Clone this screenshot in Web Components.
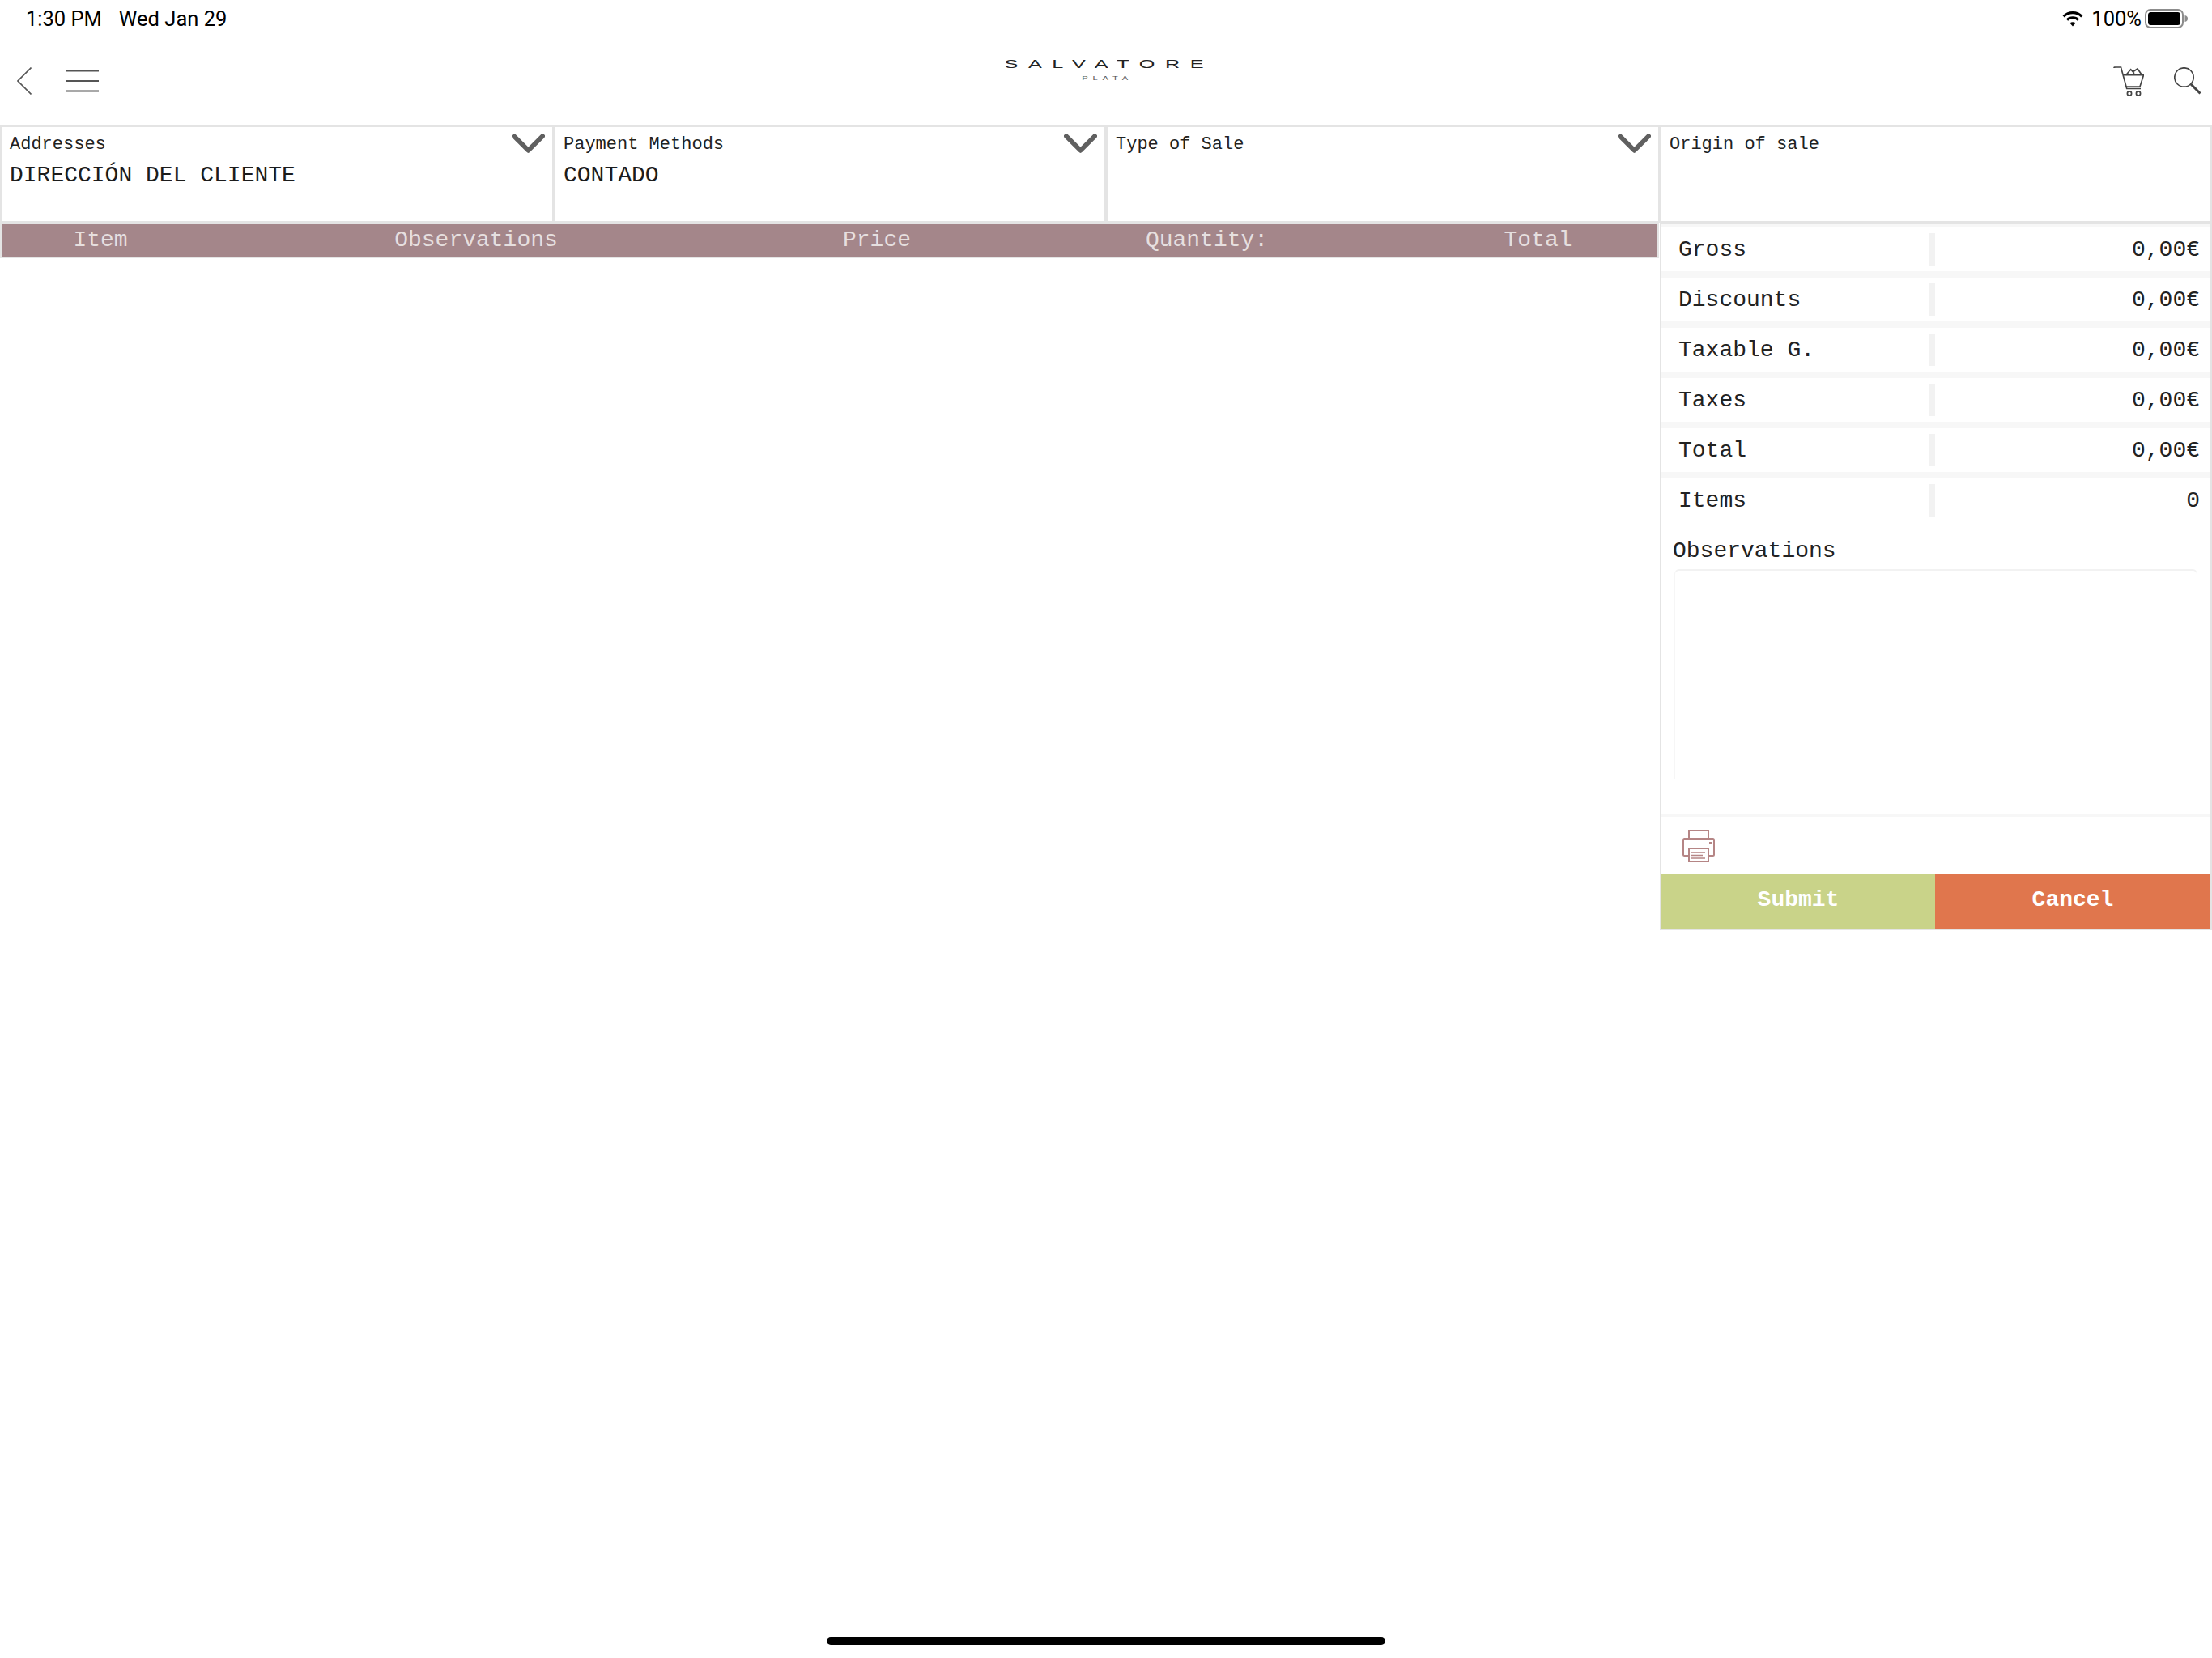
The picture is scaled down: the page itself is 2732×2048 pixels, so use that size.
<!DOCTYPE html>
<html lang="en">
<head>
<meta charset="utf-8">
<title>Salvatore Plata</title>
<style>
   html, body { margin: 0; padding: 0; background: #fff; }
   body { width: 2732px; height: 2048px; overflow: hidden; font-family: "Liberation Mono", monospace; color: #222; }
</style>
</head>
<body>
<order-page></order-page>

<script>
// status bar at the very top of the tablet
class StatusBar extends HTMLElement {
   constructor() {
      super();
      this.attachShadow({ mode: "open" });
      this.shadowRoot.innerHTML = `
         <style>
            :host {
               display: flex;
               align-items: center;
               block-size: 46px;
               padding-inline: 32px 29px;
               font: 25.5px Roboto, sans-serif;
               color: #000;
            }
            .date { margin-inline-start: 21px; }
            .right { margin-inline-start: auto; display: flex; align-items: center; }
            .pct { margin-inline: 10px 4px; }
            svg { display: block; }
         </style>
         <span>1:30 PM</span>
         <span class="date">Wed Jan 29</span>
         <div class="right">
            <svg width="26" height="20" viewBox="0 0 26 20">
               <path d="M1.700 7.300A16 16 0 0 1 24.300 7.300M6 11.600A10 10 0 0 1 20 11.600" fill="none" stroke="#000" stroke-width="3.200"/>
               <path d="M13 19.500L9.400 15.600A5.200 5.200 0 0 1 16.600 15.600Z" fill="#000"/>
            </svg>
            <span class="pct">100%</span>
            <svg width="54" height="24" viewBox="0 0 54 24">
               <rect x="1" y="1" width="46" height="22" rx="6" fill="none" stroke="#8c8c8c" stroke-width="2"/>
               <rect x="4" y="4" width="40" height="16" rx="3.5" fill="#000"/>
               <path d="M49.5 8C52 8.5 53 10 53 12S52 15.5 49.5 16Z" fill="#8c8c8c"/>
            </svg>
         </div>`;
   }
}

// back / menu, logo, cart / search
class NavBar extends HTMLElement {
   constructor() {
      super();
      this.attachShadow({ mode: "open" });
      this.shadowRoot.innerHTML = `
         <style>
            :host {
               display: grid;
               grid-template-columns: 1fr auto 1fr;
               align-items: center;
               block-size: 107px;
               padding-block-end: 2px;
               padding-inline: 13px;
            }
            .left, .right { display: flex; align-items: center; }
            .left { gap: 43px; margin-inline-start: 8px; }
            .right { justify-content: flex-end; gap: 37px; }
            svg { display: block; }
            .logo {
               display: flex;
               flex-direction: column;
               align-items: center;
               margin-block-end: 26px;
               font-family: "Liberation Sans", sans-serif;
               color: #222;
            }
            .brand {
               font-size: 14px;
               line-height: 10px;
               letter-spacing: 7px;
               margin-inline-end: -7px;
               transform: scaleX(1.8);
            }
            .sub {
               font-size: 7px;
               line-height: 5px;
               margin-block-start: 10px;
               letter-spacing: 3.6px;
               margin-inline-end: -3.6px;
               transform: scaleX(1.6);
               color: #555;
            }
         </style>
         <div class="left">
            <svg width="18" height="34" viewBox="0 0 18 34"><path d="M17.5 .5L1 17L17.5 33.5" fill="none" stroke="#555" stroke-width="1.6"/></svg>
            <svg width="40" height="28" viewBox="0 0 40 28"><path d="M0 1.5H40M0 14H40M0 26.5H40" fill="none" stroke="#555" stroke-width="2.2"/></svg>
         </div>
         <div class="logo"><span class="brand">SALVATORE</span><span class="sub">PLATA</span></div>
         <div class="right">
            <svg width="38" height="38" viewBox="0 0 38 38" fill="none" stroke="#444" stroke-width="1.7">
               <path d="M1 3C1 2 2 2 3 2H9.500L16.700 28.500H34"/>
               <path d="M12.500 11.700H37.500L33 26H16"/>
               <path d="M15.700 11.700L21.700 4.700L26 9.700M25 7.300L30 4L35 11"/>
               <circle cx="20" cy="34.500" r="2.600"/><circle cx="31" cy="34.500" r="2.600"/>
            </svg>
            <svg width="34" height="34" viewBox="0 0 34 34" fill="none" stroke="#444">
               <circle cx="12.500" cy="12.500" r="11.700" stroke-width="1.700"/>
               <path d="M21 21L32.500 32.500" stroke-width="3"/>
            </svg>
         </div>`;
   }
}

// one select-like box of the top row
class FieldBox extends HTMLElement {
   constructor() {
      super();
      this.attachShadow({ mode: "open" });
      const arrow = this.hasAttribute("arrow")
         ? `<svg class="arrow" width="41" height="24" viewBox="0 0 42 24"><path d="M3 3L21 21L39 3" fill="none" stroke="#606060" stroke-width="6" stroke-linecap="round" stroke-linejoin="round"/></svg>`
         : "";
      this.shadowRoot.innerHTML = `
         <style>
            :host {
               display: block;
               position: relative;
               box-sizing: border-box;
               block-size: 120px;
               border: 2px solid #e4e4e4;
               padding: 10px 10px 0;
            }
            .label { font-size: 22px; line-height: 24px; }
            .value { font-size: 28px; line-height: 32px; margin-block-start: 10px; color: #1c1c1c; }
            .arrow { position: absolute; inset-block-start: 8px; inset-inline-end: 9px; }
         </style>
         <div class="label">${this.getAttribute("label")}</div>
         <div class="value"><slot></slot></div>
         ${arrow}`;
   }
}

// heading of the empty lines table
class LinesHeader extends HTMLElement {
   constructor() {
      super();
      this.attachShadow({ mode: "open" });
      this.shadowRoot.innerHTML = `
         <style>
            :host {
               display: grid;
               grid-template-columns: 244px 684px 306px 506px 1fr;
               box-sizing: border-box;
               inline-size: 2049px;
               border: 2px solid #e4e4e4;
               font-size: 28px;
               line-height: 40px;
               color: #e6dfdf;
            }
            span { background: #a4868a; text-align: center; }
            .qty { padding-inline-start: 3px; }
            span:last-child { padding-inline-start: 10px; }
         </style>
         <span>Item</span><span>Observations</span><span>Price</span><span class="qty">Quantity:</span><span>Total</span>`;
   }
}

// label | value line of the totals column
class TotalRow extends HTMLElement {
   constructor() {
      super();
      this.attachShadow({ mode: "open" });
      this.shadowRoot.innerHTML = `
         <style>
            :host {
               display: grid;
               grid-template-columns: 330px 8px 1fr;
               align-items: center;
               block-size: 54px;
               margin-block-end: 8px;
               background: #fff;
               font-size: 28px;
               color: #222;
            }
            .label { padding-inline-start: 21px; }
            .bar { block-size: 40px; background: #f2f2f2; }
            .value { text-align: end; padding-inline-end: 13px; }
         </style>
         <span class="label">${this.getAttribute("label")}</span>
         <span class="bar"></span>
         <span class="value"><slot></slot></span>`;
   }
}

// totals, observations, print icon and the two buttons
class TotalsPanel extends HTMLElement {
   constructor() {
      super();
      this.attachShadow({ mode: "open" });
      this.shadowRoot.innerHTML = `
         <style>
            :host {
               display: block;
               box-sizing: border-box;
               inline-size: 682px;
               block-size: 874px;
               border: 2px solid #e4e4e4;
               background: #fff;
            }
            .totals { background: #f7f7f7; padding-block-start: 4px; }
            .obs { block-size: 356px; box-sizing: border-box; padding: 14px 16px 0 14px; border-block-end: 4px solid #f7f7f7; }
            .obs label { display: block; font-size: 28px; line-height: 28px; color: #222; }
            textarea {
               display: block;
               box-sizing: border-box;
               inline-size: 646px;
               block-size: 259px;
               margin: 8px 0 0 2px;
               padding: 0;
               resize: none;
               outline: none;
               background: #fff;
               border: 1px solid #f6f6f6;
               border-block-start: 2px solid #f2f2f2;
               border-block-end: none;
               border-radius: 6px 6px 0 0;
            }
            .print { block-size: 70px; padding: 16px 0 0 26px; box-sizing: border-box; }
            .print svg { display: block; }
            .actions { display: grid; grid-template-columns: 338px 340px; }
            button {
               block-size: 68px;
               border: none;
               padding: 0 0 3px;
               color: #fff;
               font: bold 28px "Liberation Mono", monospace;
            }
            .submit { background: #c9d389; }
            .cancel { background: #e0764d; }
         </style>
         <div class="totals"><slot></slot></div>
         <div class="obs">
            <label for="notes">Observations</label>
            <textarea id="notes"></textarea>
         </div>
         <div class="print">
            <svg width="40" height="40" viewBox="0 0 40 40" fill="none" stroke="#b58585" stroke-width="2">
               <path d="M8 11V1H32V11"/>
               <path d="M8 32H2.500Q1 32 1 30.500V12.500Q1 11 2.500 11H37.500Q39 11 39 12.500V30.500Q39 32 37.500 32H32"/>
               <rect x="8" y="23" width="24" height="16"/>
               <path d="M11 28H28M11 31.500H25M11 35H28" stroke-width="1.500"/>
               <rect x="33" y="15" width="3" height="3" fill="#b58585" stroke="none"/>
            </svg>
         </div>
         <div class="actions">
            <button class="submit" type="button">Submit</button>
            <button class="cancel" type="button">Cancel</button>
         </div>`;
   }
}

// the whole screen
class OrderPage extends HTMLElement {
   constructor() {
      super();
      this.attachShadow({ mode: "open" });
      this.shadowRoot.innerHTML = `
         <style>
            :host { display: flex; flex-direction: column; block-size: 2048px; }
            .fields { display: grid; grid-template-columns: 684px 682px 684px 682px; }
            .body { display: flex; justify-content: space-between; align-items: flex-start; flex: 1; }
            .home { align-self: center; inline-size: 690px; block-size: 10px; border-radius: 5px; background: #000; margin-block-end: 16px; }
         </style>
         <status-bar></status-bar>
         <nav-bar></nav-bar>
         <div class="fields">
            <field-box label="Addresses" arrow>DIRECCIÓN DEL CLIENTE</field-box>
            <field-box label="Payment Methods" arrow>CONTADO</field-box>
            <field-box label="Type of Sale" arrow></field-box>
            <field-box label="Origin of sale"></field-box>
         </div>
         <div class="body">
            <lines-header></lines-header>
            <totals-panel>
               <total-row label="Gross">0,00€</total-row>
               <total-row label="Discounts">0,00€</total-row>
               <total-row label="Taxable G.">0,00€</total-row>
               <total-row label="Taxes">0,00€</total-row>
               <total-row label="Total">0,00€</total-row>
               <total-row label="Items">0</total-row>
            </totals-panel>
         </div>
         <div class="home"></div>`;
   }
}

customElements.define("status-bar", StatusBar);
customElements.define("nav-bar", NavBar);
customElements.define("field-box", FieldBox);
customElements.define("lines-header", LinesHeader);
customElements.define("total-row", TotalRow);
customElements.define("totals-panel", TotalsPanel);
customElements.define("order-page", OrderPage);
</script>
</body>
</html>
